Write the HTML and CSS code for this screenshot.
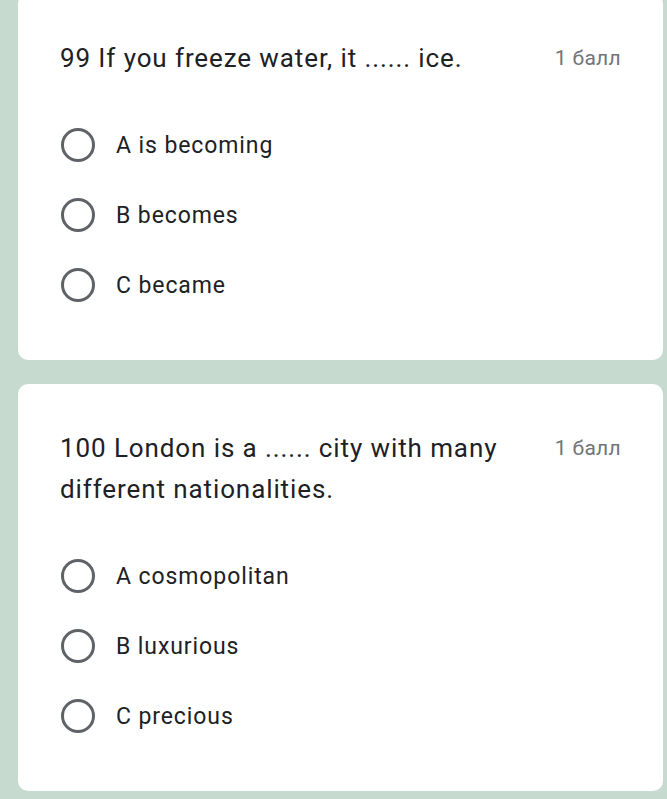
FILE: index.html
```html
<!DOCTYPE html>
<html lang="en">
<head>
  <meta charset="UTF-8" />
  <meta name="viewport" content="width=device-width, initial-scale=1.0"/>
  <title>Quiz</title>
  <link rel="stylesheet" href="styles.css">
</head>
<body>

<div class="form">

  <!-- Question 99 -->
  <div class="card">
    <div class="card-head">
      <div class="question">99 If you freeze water, it ...... ice.</div>
      <div class="points">1 балл</div>
    </div>
    <div class="options">
      <label class="option"><span class="radio"></span><span class="label">A is becoming</span></label>
      <label class="option"><span class="radio"></span><span class="label">B becomes</span></label>
      <label class="option"><span class="radio"></span><span class="label">C became</span></label>
    </div>
  </div>

  <!-- Question 100 -->
  <div class="card">
    <div class="card-head">
      <div class="question">100 London is a ...... city with many different nationalities.</div>
      <div class="points">1 балл</div>
    </div>
    <div class="options">
      <label class="option"><span class="radio"></span><span class="label">A cosmopolitan</span></label>
      <label class="option"><span class="radio"></span><span class="label">B luxurious</span></label>
      <label class="option"><span class="radio"></span><span class="label">C precious</span></label>
    </div>
  </div>

</div>

</body>
</html>
```

FILE: styles.css
```css
* {
  margin: 0;
  padding: 0;
  box-sizing: border-box;
}

body {
  background-color: #c6dacf;
  font-family: Roboto, "Noto Sans", sans-serif;
  color: #202124;
  height: 799px;
  overflow: hidden;
}

.form {
  display: flex;
  flex-direction: column;
  gap: 24px;
  margin-top: -6px;
  padding: 0 4px 0 18px;
}

.card {
  background: #ffffff;
  border-radius: 10px;
  padding: 44px 42px 40px 42px;
}

.card-head {
  display: flex;
  justify-content: space-between;
  align-items: flex-start;
  gap: 24px;
}

.question {
  font-size: 26px;
  line-height: 41px;
  letter-spacing: 0.9px;
  color: #202124;
  flex: 1;
}

.points {
  font-size: 21px;
  line-height: 41px;
  letter-spacing: 0.3px;
  color: #70757a;
  white-space: nowrap;
}

.options {
  margin-top: 31px;
  display: flex;
  flex-direction: column;
}

.option {
  display: flex;
  align-items: center;
  height: 70px;
  gap: 21px;
  padding-left: 1px;
}

.radio {
  width: 34px;
  height: 34px;
  border: 3.5px solid #5f6368;
  border-radius: 50%;
  flex-shrink: 0;
}

.label {
  font-size: 23px;
  letter-spacing: 0.9px;
  color: #202124;
}
```
